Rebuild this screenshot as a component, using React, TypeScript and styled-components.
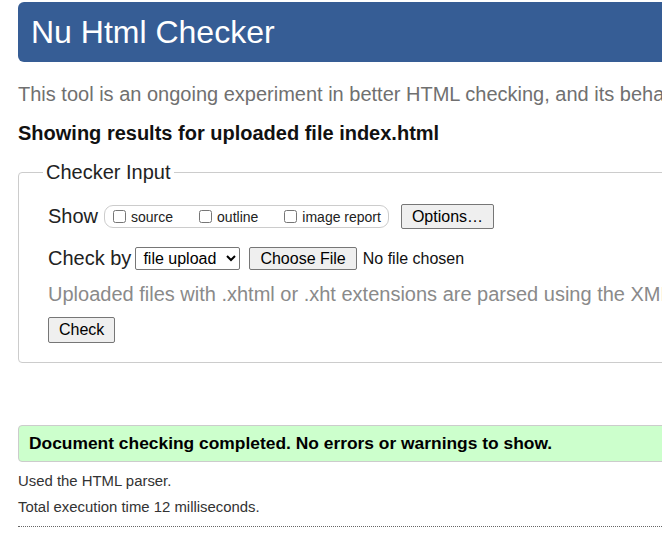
import React from "react";
import styled, { createGlobalStyle } from "styled-components";

const Global = createGlobalStyle`
  html, body {
    margin: 0;
    padding: 0;
    overflow: hidden;
    background: #fff;
  }
  body {
    font-family: "Liberation Sans", Arial, sans-serif;
    color: #222;
  }
`;

const Page = styled.div`
  width: 1000px;
  padding: 2px 0 0 18px;
`;

const Header = styled.h1`
  margin: 0;
  height: 60px;
  line-height: 60px;
  padding-left: 13px;
  font-size: 32px;
  font-weight: normal;
  color: #fff;
  background: #365d95;
  border-radius: 6px;
`;

const Intro = styled.p`
  margin: 21px 0 0;
  font-size: 20px;
  line-height: 23px;
  color: #707070;
  white-space: nowrap;
`;

const Showing = styled.h2`
  margin: 16px 0 0;
  font-size: 20px;
  line-height: 23px;
  font-weight: bold;
  color: #111;
`;

const Fieldset = styled.fieldset`
  margin: 16px 0 0;
  padding: 20px 0 19px 29px;
  border: 1px solid #ccc;
  border-radius: 4px;
  min-width: 0;
`;

const Legend = styled.legend`
  margin-left: -5px;
  padding: 0 3px;
  font-size: 20px;
  line-height: 23px;
  color: #222;
`;

const Row = styled.div<{ $mt?: number; $h: number }>`
  display: flex;
  align-items: center;
  height: ${(p) => p.$h}px;
  margin-top: ${(p) => p.$mt ?? 0}px;
  white-space: nowrap;
`;

const Label = styled.span`
  font-size: 20px;
  line-height: 23px;
  color: #222;
`;

const Pill = styled.div`
  display: flex;
  align-items: center;
  gap: 26px;
  height: 21px;
  margin-left: 6px;
  padding: 0 7px 0 8px;
  border: 1px solid #ccc;
  border-radius: 9px;
`;

const CheckLabel = styled.label`
  display: flex;
  align-items: center;
  font-size: 14px;
  color: #222;
`;

const Box = styled.input`
  width: 13px;
  height: 13px;
  margin: 0 5px 0 0;
`;

const Button = styled.button<{ $h: number; $ml?: number }>`
  height: ${(p) => p.$h}px;
  margin-left: ${(p) => p.$ml ?? 0}px;
  padding: 0 10px;
  font-family: "Liberation Sans", Arial, sans-serif;
  font-size: 16px;
  color: #000;
  background: #efefef;
  border: 1px solid #767676;
  border-radius: 2px;
`;

const Select = styled.select`
  height: 23px;
  width: 105px;
  margin-left: 4px;
  padding-left: 3px;
  font-family: "Liberation Sans", Arial, sans-serif;
  font-size: 16px;
  color: #000;
  background: #fff;
  border: 1px solid #767676;
  border-radius: 2px;
`;

const FileName = styled.span`
  margin-left: 6px;
  font-size: 16px;
  color: #111;
`;

const Hint = styled.p`
  margin: 13px 0 0;
  font-size: 20px;
  line-height: 23px;
  color: #8a8a8a;
  white-space: nowrap;
`;

const Success = styled.div`
  display: flex;
  align-items: center;
  height: 35px;
  margin-top: 62px;
  padding: 0 10px;
  background: #ccffcc;
  border: 1px solid #ccc;
  border-radius: 4px;
  font-size: 17.4px;
  font-weight: bold;
  color: #000;
  white-space: nowrap;
`;

const Detail = styled.p<{ $mt: number }>`
  margin: ${(p) => p.$mt}px 0 0;
  font-size: 14.9px;
  line-height: 17px;
  color: #333;
`;

const Rule = styled.hr`
  margin: 10px 0 0;
  border: 0;
  border-top: 1px dotted #666;
`;

export default function App() {
  return (
    <>
      <Global />
      <Page>
        <Header>Nu Html Checker</Header>
        <Intro>
          This tool is an ongoing experiment in better HTML checking, and its behavior remains subject to change
        </Intro>
        <Showing>Showing results for uploaded file index.html</Showing>
        <Fieldset>
          <Legend>Checker Input</Legend>
          <Row $h={25}>
            <Label>Show</Label>
            <Pill>
              <CheckLabel>
                <Box type="checkbox" />
                source
              </CheckLabel>
              <CheckLabel>
                <Box type="checkbox" />
                outline
              </CheckLabel>
              <CheckLabel>
                <Box type="checkbox" />
                image report
              </CheckLabel>
            </Pill>
            <Button $h={25} $ml={12}>Options…</Button>
          </Row>
          <Row $h={23} $mt={18}>
            <Label>Check by</Label>
            <Select defaultValue="file">
              <option value="file">file upload</option>
              <option value="addr">address</option>
              <option value="text">text input</option>
            </Select>
            <Button $h={23} $ml={9}>Choose File</Button>
            <FileName>No file chosen</FileName>
          </Row>
          <Hint>
            Uploaded files with .xhtml or .xht extensions are parsed using the XML parser.
          </Hint>
          <Row $h={26} $mt={11}>
            <Button $h={26}>Check</Button>
          </Row>
        </Fieldset>
        <Success>Document checking completed. No errors or warnings to show.</Success>
        <Detail $mt={11}>Used the HTML parser.</Detail>
        <Detail $mt={9}>Total execution time 12 milliseconds.</Detail>
        <Rule />
      </Page>
    </>
  );
}
